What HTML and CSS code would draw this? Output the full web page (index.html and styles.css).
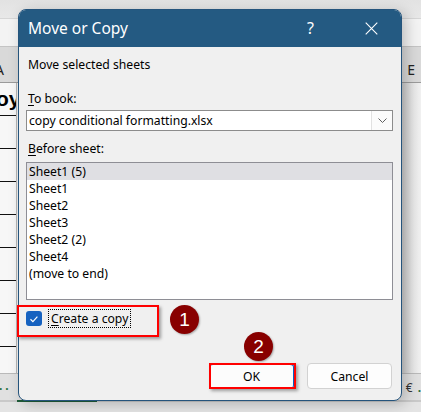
FILE: index.html
```html
<!DOCTYPE html>
<html>
<head>
<meta charset="utf-8">
<link rel="stylesheet" href="styles.css">
</head>
<body>
<div class="screen">
  <div class="sheet">
    <div class="ribbon"></div>
    <div class="formula"></div>
    <div class="colhead">
      <span class="col-a">A</span>
      <span class="col-e">E</span>
    </div>
    <div class="grid">
      <div class="colA">
        <div class="cell first">oy</div>
        <div class="cell"></div>
        <div class="cell"></div>
        <div class="cell"></div>
        <div class="cell"></div>
        <div class="cell"></div>
        <div class="cell"></div>
        <div class="cell"></div>
        <div class="cell last"></div>
      </div>
      <div class="colMid"></div>
      <div class="colE"></div>
    </div>
    <div class="tabbar">
      <span class="dots">..</span>
      <span class="euro">€ <b>.</b></span>
    </div>
    <div class="bottombar"><span class="activetab"></span></div>
  </div>

  <div class="dialog">
    <div class="titlebar">
      <span class="title">Move or Copy</span>
      <span class="help">?</span>
      <svg class="close" width="13" height="13" viewBox="0 0 13 13"><path d="M0.7 0.7 L12.3 12.3 M12.3 0.7 L0.7 12.3" stroke="#fff" stroke-width="1.1" fill="none"/></svg>
    </div>
    <div class="body">
      <div class="label first">Move selected sheets</div>
      <div class="label book"><u>T</u>o book:</div>
      <div class="combo">
        <span class="combo-text">copy conditional formatting.xlsx</span>
        <span class="drop"><svg width="9" height="5" viewBox="0 0 9 5"><path d="M0.5 0.5 L4.5 4.5 L8.5 0.5" stroke="#606060" stroke-width="1" fill="none"/></svg></span>
      </div>
      <div class="label before"><u>B</u>efore sheet:</div>
      <div class="list">
        <div class="item selected">Sheet1 (5)</div>
        <div class="item">Sheet1</div>
        <div class="item">Sheet2</div>
        <div class="item">Sheet3</div>
        <div class="item">Sheet2 (2)</div>
        <div class="item">Sheet4</div>
        <div class="item">(move to end)</div>
      </div>
      <div class="check-row">
        <span class="checkbox"><svg width="16" height="16" viewBox="0 0 16 16"><path d="M4.5 8.3 L6.9 10.6 L11.4 5.6" stroke="#fff" stroke-width="1.2" fill="none"/></svg></span>
        <span class="check-label"><u>C</u>reate a copy</span>
      </div>
      <div class="buttons">
        <button class="btn default">OK</button>
        <button class="btn">Cancel</button>
      </div>
    </div>
  </div>

  <div class="mark box1"></div>
  <div class="badge b1">1</div>
  <div class="badge b2">2</div>
  <div class="mark box2"></div>
</div>
</body>
</html>
```

FILE: styles.css
```css
* { box-sizing: border-box; }
html, body { margin: 0; padding: 0; }
body {
  width: 421px;
  height: 412px;
  overflow: hidden;
  font-family: "Noto Sans", "Open Sans", sans-serif;
  font-size: 12.2px;
  color: #000;
}
.screen {
  position: relative;
  width: 421px;
  height: 412px;
  overflow: hidden;
}

/* ---------- background spreadsheet ---------- */
.sheet {
  display: flex;
  flex-direction: column;
  width: 421px;
  height: 412px;
  background: #ffffff;
}
.ribbon {
  height: 18px;
  background: linear-gradient(#e2e2e2, #e8e8e8);
}
.formula {
  height: 29px;
  background: #f3f3f3;
  border-top: 1px solid #d6d6d6;
  border-bottom: 1px solid #c4c4c4;
}
.colhead {
  height: 36px;
  display: flex;
  justify-content: space-between;
  align-items: flex-end;
  padding-bottom: 3px;
  background: #d9d9d9;
  border-bottom: 1px solid #9b9b9b;
  font-family: "Noto Sans", sans-serif;
  font-size: 14px;
  line-height: 18px;
  color: #222;
}
.col-a { margin-left: -5px; }
.col-e { margin-right: 6px; }
.grid {
  flex: 1;
  display: flex;
}
.colA {
  width: 17px;
  display: flex;
  flex-direction: column;
  background: #f7f7f7;
  border-right: 1px solid #b5b5b5;
}
.cell {
  height: 33px;
  border-bottom: 1px solid #111;
}
.cell.first {
  font-family: "Liberation Sans", sans-serif;
  font-weight: bold;
  font-size: 21px;
  line-height: 32px;
  text-indent: -4px;
  overflow: hidden;
  white-space: nowrap;
}
.cell.last { border-bottom: none; flex: 1; }
.colMid { flex: 1; background: #f0f0f0; }
.colE {
  width: 20px;
  background: linear-gradient(90deg, #c9c9c9, #e6e6e6 60%, #f1f1f1);
}
.tabbar {
  height: 27px;
  display: flex;
  justify-content: space-between;
  align-items: center;
  background: #e0e0e0;
  border-top: 1px solid #b9b9b9;
  font-size: 12px;
}
.dots {
  color: #1e6e3c;
  font-weight: bold;
  letter-spacing: 3px;
  margin-left: -1px;
  margin-top: -4px;
}
.euro { color: #333; margin-right: 0; }
.euro b { color: #1e6e3c; margin-left: 2px; }
.bottombar {
  height: 12px;
  background: linear-gradient(#c9c9c9 0 2px, #e4e4e4 2px);
  padding-left: 17px;
}
.activetab {
  display: block;
  width: 80px;
  height: 2px;
  background: #1f5d3a;
}

/* ---------- dialog window ---------- */
.dialog {
  position: absolute;
  left: 18px;
  top: 9px;
  width: 384px;
  height: 392px;
  background: #f0f0f0;
  border: 1px solid #25547c;
  border-radius: 8px;
  box-shadow: 4px 3px 14px rgba(0,0,0,0.22);
  display: flex;
  flex-direction: column;
}
.titlebar {
  height: 37px;
  background: #245a82;
  border-radius: 7px 7px 0 0;
  display: flex;
  align-items: center;
  color: #fff;
  padding-left: 9px;
}
.title {
  font-size: 15.5px;
  flex: 1;
  margin-top: -1px;
}
.help {
  font-size: 16px;
  width: 20px;
  margin-right: 38px;
  margin-top: -1px;
}
.close {
  margin-right: 23px;
  margin-top: -1px;
}
.body {
  flex: 1;
  display: flex;
  flex-direction: column;
  padding: 10px 8px 0 7px;
}
.label {
  height: 16px;
  line-height: 16px;
  padding-left: 2px;
}
.label u { text-underline-offset: 2px; }
.label.book { margin-top: 18px; }
.label.before { margin-top: 10px; }
.combo {
  margin-top: 3px;
  height: 21px;
  border: 1px solid #8c8c8c;
  background: #fff;
  display: flex;
  align-items: center;
}
.combo-text {
  flex: 1;
  padding-left: 2px;
  white-space: nowrap;
}
.drop {
  width: 21px;
  height: 19px;
  border-left: 1px solid #e1e1e1;
  background: #fbfbfb;
  display: flex;
  align-items: center;
  justify-content: center;
}
.list {
  margin-top: 5px;
  height: 138px;
  border: 1px solid #8e8e95;
  background: #fff;
}
.item {
  height: 17px;
  line-height: 17px;
  padding-left: 2px;
}
.item.selected { background: #dfdfe3; }
.check-row {
  margin-top: 9px;
  height: 19px;
  display: flex;
  align-items: center;
}
.checkbox {
  width: 16px;
  height: 15px;
  border-radius: 3px;
  background: #1662c0;
  display: flex;
  align-items: center;
  justify-content: center;
}
.check-label {
  margin-left: 6px;
  height: 19px;
  line-height: 17px;
  padding: 0 2px;
  border: 1px dotted #000;
}
.check-label u { text-underline-offset: 2px; }
.buttons {
  margin-top: 35px;
  display: flex;
  justify-content: flex-end;
  gap: 13px;
  padding-right: 1px;
}
.btn {
  width: 85px;
  height: 26px;
  font-family: inherit;
  font-size: 12.2px;
  color: #000;
  background: #fdfdfd;
  border: 1px solid #d2d2d2;
  border-radius: 4px;
  padding: 0;
}
.btn.default {
  border: 1px solid #0a5fc0;
  border-width: 2px 1px 1px 1px;
  background: #fcfcfc;
}

/* ---------- annotations ---------- */
.mark {
  position: absolute;
  border: 2px solid #f00;
  box-shadow: 2px 2px 3px rgba(0,0,0,0.35);
}
.box1 { left: 17px; top: 305px; width: 142px; height: 32px; }
.box2 { left: 209px; top: 363px; width: 87px; height: 26px; }
.badge {
  position: absolute;
  width: 29px;
  height: 29px;
  border-radius: 50%;
  background: #880000;
  color: #fff;
  font-family: "Liberation Sans", sans-serif;
  font-size: 19px;
  line-height: 29px;
  text-align: center;
  box-shadow: 1px 1px 2px rgba(0,0,0,0.3);
}
.b1 { left: 170px; top: 305px; }
.b2 { left: 244px; top: 332px; }
```
